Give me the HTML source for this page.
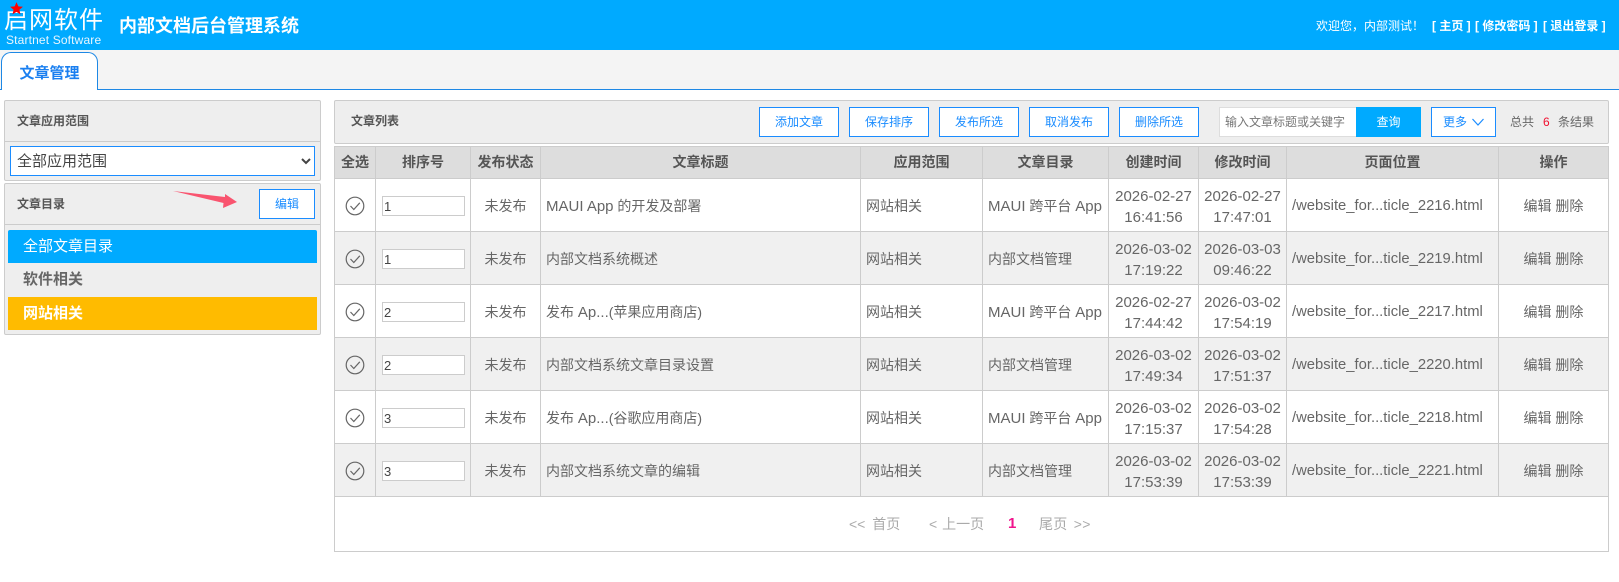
<!DOCTYPE html>
<html lang="zh"><head><meta charset="utf-8"><title>内部文档后台管理系统</title>
<style>
*{box-sizing:border-box}
html,body{margin:0;padding:0;width:1619px;height:582px;overflow:hidden;background:#fff;font-family:"Liberation Sans","Noto Sans CJK SC",sans-serif;color:#666;font-size:14px}
.a{position:absolute;white-space:nowrap}
.panel{position:absolute;background:#eee;border:1px solid #ccc;border-radius:2px}
.btn{position:absolute;top:107px;height:30px;width:80px;background:#fff;border:1px solid #1a8cff;color:#1a8cff;font-size:12px;line-height:28px;text-align:center}
table{position:absolute;left:334px;top:146px;width:1274px;height:350px;border-collapse:collapse;table-layout:fixed}
th,td{border:1px solid #ccc;text-align:center;padding:0;font-size:14px;line-height:21px;color:#666}
th{background:#ddd;color:#555;font-weight:bold;height:32px}
td{height:53px;background:#fff;padding-top:3px}
tr.g td{background:#f0f0f0}
td.l{text-align:left;padding-left:5px}
td.n{white-space:nowrap}
.w{font-size:15px}
td.p{font-size:14.8px}
.ip{display:block;margin:-1px 0 0 6px;width:83px;height:20px;background:#fff;border:1px solid #ccc;font-size:13px;line-height:19px;text-align:left;padding-left:1px;color:#444;font-family:"Liberation Sans",sans-serif}
td svg{display:block;margin:-2px auto 0}
</style></head><body>
<div class="a" style="left:0;top:0;width:1619px;height:50px;background:#0af"></div>
<div class="a" style="left:4px;top:4px;font-size:24px;line-height:34px;color:#fff;font-weight:400;letter-spacing:1px">启网软件</div>
<div class="a" style="left:6px;top:33px;font-size:12px;line-height:15px;color:#e8f6ff;letter-spacing:.15px">Startnet Software</div>
<svg class="a" style="left:9px;top:1px" width="15" height="15" viewBox="0 0 14 14"><polygon points="7,1 8.7,5 13,5.4 9.7,8.2 10.7,12.5 7,10.2 3.3,12.5 4.3,8.2 1,5.4 5.3,5" fill="#f00"/></svg>
<div class="a" style="left:119px;top:13px;font-size:18px;line-height:26px;font-weight:bold;color:#fff">内部文档后台管理系统</div>
<div class="a" style="left:1316px;top:17px;font-size:12px;line-height:18px;color:#fff">欢迎您，内部测试！</div>
<div class="a" style="left:1432px;top:17px;font-size:12px;line-height:18px;color:#fff;font-weight:bold">[ 主页 ]</div>
<div class="a" style="left:1475px;top:17px;font-size:12px;line-height:18px;color:#fff;font-weight:bold">[ 修改密码 ]</div>
<div class="a" style="left:1543px;top:17px;font-size:12px;line-height:18px;color:#fff;font-weight:bold">[ 退出登录 ]</div>

<div class="a" style="left:0;top:50px;width:1619px;height:40px;background:#f4f4f4;border-bottom:1px solid #1e88e5"></div>
<div class="a" style="left:1px;top:52px;width:97px;height:38px;background:#fff;border:1px solid #1e88e5;border-bottom:0;border-radius:10px 10px 0 0;color:#1a7ff0;font-size:15px;font-weight:bold;line-height:42px;text-align:center">文章管理</div>

<div class="panel" style="left:4px;top:100px;width:317px;height:81px"></div>
<div class="a" style="left:5px;top:141px;width:315px;height:1px;background:#ccc"></div>
<div class="a" style="left:17px;top:112px;font-size:12px;line-height:18px;font-weight:bold;color:#555">文章应用范围</div>
<select class="a" style="left:10px;top:146px;width:305px;height:30px;border:1px solid #1a8cff;background:#fff;font-size:15px;color:#444;padding-left:2px;font-family:inherit;border-radius:0"><option>全部应用范围</option></select>

<div class="panel" style="left:4px;top:183px;width:317px;height:152px"></div>
<div class="a" style="left:5px;top:224px;width:315px;height:1px;background:#ccc"></div>
<div class="a" style="left:17px;top:195px;font-size:12px;line-height:18px;font-weight:bold;color:#555">文章目录</div>
<div class="btn" style="left:259px;top:189px;width:56px">编辑</div>
<svg class="a" style="left:170px;top:188px" width="70" height="24" viewBox="0 0 70 24"><polygon points="3,3 55,9 55,6 67,14 53,20 53.5,15" fill="#f9546f"/></svg>
<div class="a" style="left:8px;top:230px;width:309px;height:33px;background:#0af;color:#fff;font-size:15px;line-height:33px;padding-left:15px;border-radius:2px 2px 0 0">全部文章目录</div>
<div class="a" style="left:23px;top:263px;font-size:15px;line-height:34px;font-weight:bold;color:#666">软件相关</div>
<div class="a" style="left:8px;top:297px;width:309px;height:33px;background:#fb0;color:#fff;font-size:15px;font-weight:bold;line-height:33px;padding-left:15px">网站相关</div>

<div class="a" style="left:334px;top:146px;width:1275px;height:406px;border:1px solid #ccc"></div>
<div class="panel" style="left:334px;top:100px;width:1275px;height:44px"></div>
<div class="a" style="left:351px;top:112px;font-size:12px;line-height:18px;font-weight:bold;color:#555">文章列表</div>
<div class="btn" style="left:759px">添加文章</div>
<div class="btn" style="left:849px">保存排序</div>
<div class="btn" style="left:939px">发布所选</div>
<div class="btn" style="left:1029px">取消发布</div>
<div class="btn" style="left:1119px">删除所选</div>
<div class="a" style="left:1219px;top:107px;width:137px;height:30px;background:#fff;border:1px solid #ddd;border-right:0;font-size:12px;line-height:28px;padding-left:5px;color:#777">输入文章标题或关键字</div>
<div class="a" style="left:1356px;top:107px;width:65px;height:30px;background:#0af;color:#fff;font-size:12px;line-height:30px;text-align:center">查询</div>
<div class="btn" style="left:1431px;width:65px;text-align:left;padding-left:11px">更多</div>
<svg class="a" style="left:1471px;top:117px" width="14" height="10" viewBox="0 0 14 10"><path d="M1.5 2 L7 8 L12.5 2" fill="none" stroke="#1a8cff" stroke-width="1.2"/></svg>
<div class="a" style="left:1510px;top:113px;font-size:12px;line-height:18px;color:#666">总共</div>
<div class="a" style="left:1543px;top:113px;font-size:12px;line-height:18px;color:#f01030">6</div>
<div class="a" style="left:1558px;top:113px;font-size:12px;line-height:18px;color:#666">条结果</div>

<table>
<colgroup><col style="width:41px"><col style="width:95px"><col style="width:70px"><col style="width:320px"><col style="width:122px"><col style="width:126px"><col style="width:90px"><col style="width:88px"><col style="width:212px"><col style="width:110px"></colgroup>
<tr><th>全选</th><th>排序号</th><th>发布状态</th><th>文章标题</th><th>应用范围</th><th>文章目录</th><th>创建时间</th><th>修改时间</th><th>页面位置</th><th>操作</th></tr>
<tr><td><svg width="20" height="20" viewBox="0 0 20 20"><circle cx="10" cy="10" r="8.8" fill="none" stroke="#666" stroke-width="1.2"/><path d="M5.5 10 L8.8 13.5 L14.8 6.8" fill="none" stroke="#666" stroke-width="1.2"/></svg></td><td><div class="ip">1</div></td><td>未发布</td><td class="l"><span class="w">MAUI App</span> 的开发及部署</td><td class="l">网站相关</td><td class="l n"><span class="w">MAUI</span> 跨平台 <span class="w">App</span></td><td class="w">2026-02-27<br>16:41:56</td><td class="w">2026-02-27<br>17:47:01</td><td class="l n p">/website_for...ticle_2216.html</td><td>编辑 删除</td></tr>
<tr class="g"><td><svg width="20" height="20" viewBox="0 0 20 20"><circle cx="10" cy="10" r="8.8" fill="none" stroke="#666" stroke-width="1.2"/><path d="M5.5 10 L8.8 13.5 L14.8 6.8" fill="none" stroke="#666" stroke-width="1.2"/></svg></td><td><div class="ip">1</div></td><td>未发布</td><td class="l">内部文档系统概述</td><td class="l">网站相关</td><td class="l n">内部文档管理</td><td class="w">2026-03-02<br>17:19:22</td><td class="w">2026-03-03<br>09:46:22</td><td class="l n p">/website_for...ticle_2219.html</td><td>编辑 删除</td></tr>
<tr><td><svg width="20" height="20" viewBox="0 0 20 20"><circle cx="10" cy="10" r="8.8" fill="none" stroke="#666" stroke-width="1.2"/><path d="M5.5 10 L8.8 13.5 L14.8 6.8" fill="none" stroke="#666" stroke-width="1.2"/></svg></td><td><div class="ip">2</div></td><td>未发布</td><td class="l">发布 <span class="w">Ap...</span>(苹果应用商店)</td><td class="l">网站相关</td><td class="l n"><span class="w">MAUI</span> 跨平台 <span class="w">App</span></td><td class="w">2026-02-27<br>17:44:42</td><td class="w">2026-03-02<br>17:54:19</td><td class="l n p">/website_for...ticle_2217.html</td><td>编辑 删除</td></tr>
<tr class="g"><td><svg width="20" height="20" viewBox="0 0 20 20"><circle cx="10" cy="10" r="8.8" fill="none" stroke="#666" stroke-width="1.2"/><path d="M5.5 10 L8.8 13.5 L14.8 6.8" fill="none" stroke="#666" stroke-width="1.2"/></svg></td><td><div class="ip">2</div></td><td>未发布</td><td class="l">内部文档系统文章目录设置</td><td class="l">网站相关</td><td class="l n">内部文档管理</td><td class="w">2026-03-02<br>17:49:34</td><td class="w">2026-03-02<br>17:51:37</td><td class="l n p">/website_for...ticle_2220.html</td><td>编辑 删除</td></tr>
<tr><td><svg width="20" height="20" viewBox="0 0 20 20"><circle cx="10" cy="10" r="8.8" fill="none" stroke="#666" stroke-width="1.2"/><path d="M5.5 10 L8.8 13.5 L14.8 6.8" fill="none" stroke="#666" stroke-width="1.2"/></svg></td><td><div class="ip">3</div></td><td>未发布</td><td class="l">发布 <span class="w">Ap...</span>(谷歌应用商店)</td><td class="l">网站相关</td><td class="l n"><span class="w">MAUI</span> 跨平台 <span class="w">App</span></td><td class="w">2026-03-02<br>17:15:37</td><td class="w">2026-03-02<br>17:54:28</td><td class="l n p">/website_for...ticle_2218.html</td><td>编辑 删除</td></tr>
<tr class="g"><td><svg width="20" height="20" viewBox="0 0 20 20"><circle cx="10" cy="10" r="8.8" fill="none" stroke="#666" stroke-width="1.2"/><path d="M5.5 10 L8.8 13.5 L14.8 6.8" fill="none" stroke="#666" stroke-width="1.2"/></svg></td><td><div class="ip">3</div></td><td>未发布</td><td class="l">内部文档系统文章的编辑</td><td class="l">网站相关</td><td class="l n">内部文档管理</td><td class="w">2026-03-02<br>17:53:39</td><td class="w">2026-03-02<br>17:53:39</td><td class="l n p">/website_for...ticle_2221.html</td><td>编辑 删除</td></tr>
</table>

<div class="a" style="left:849px;top:514px;font-size:14px;line-height:20px;color:#aaa;word-spacing:3px">&lt;&lt; 首页</div>
<div class="a" style="left:929px;top:514px;font-size:14px;line-height:20px;color:#aaa;word-spacing:1px">&lt; 上一页</div>
<div class="a" style="left:1008px;top:514px;font-size:15px;line-height:20px;font-weight:bold;color:#f0148c">1</div>
<div class="a" style="left:1039px;top:514px;font-size:14px;line-height:20px;color:#aaa;word-spacing:2px;letter-spacing:.3px">尾页 &gt;&gt;</div>
</body></html>
